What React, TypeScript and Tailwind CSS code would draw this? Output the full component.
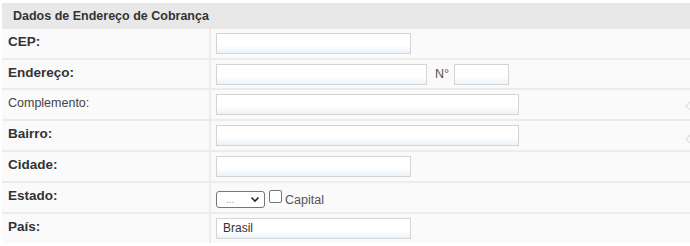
import React from "react";

type Row = {
  label: string;
  bold?: boolean;
  h?: string;
  content: React.ReactNode;
};

const Field = ({ w, value }: { w: string; value?: string }) => (
  <div
    className={`${w} h-[21px] border border-[#d4d4d4] bg-gradient-to-b from-white from-60% to-[#eaf3fa] px-[6px] text-[12px] leading-[19px] text-[#333]`}
  >
    {value}
  </div>
);

const rows: Row[] = [
  { label: "CEP:", bold: true, content: <Field w="w-[195px]" /> },
  {
    label: "Endereço:",
    bold: true,
    h: "h-[28px]",
    content: (
      <div className="flex items-center">
        <Field w="w-[211px]" />
        <span className="ml-[8px] mr-[5px] text-[12.5px] text-[#555]">N°</span>
        <Field w="w-[55px]" />
      </div>
    ),
  },
  { label: "Complemento:", content: <Field w="w-[303px]" /> },
  { label: "Bairro:", bold: true, content: <Field w="w-[303px]" /> },
  { label: "Cidade:", bold: true, content: <Field w="w-[195px]" /> },
  {
    label: "Estado:",
    bold: true,
    content: (
      <div className="flex items-end pt-[3px]">
        <div className="flex h-[17px] w-[49px] items-center justify-between rounded-[3px] border border-[#767676] bg-white pl-[9px] pr-[4px] text-[10px] text-[#999]">
          <span className="leading-[10px]">...</span>
          <svg width="10" height="7" viewBox="0 0 10 7" fill="none" stroke="#222" strokeWidth="1.6">
            <path d="M1.5 1.5 5 5l3.5-3.5" />
          </svg>
        </div>
        <div className="mb-[5px] ml-[4px] h-[13px] w-[13px] rounded-[2px] border border-[#767676] bg-white" />
        <span className="ml-[3px] text-[12.5px] leading-[15px] text-[#555]">Capital</span>
      </div>
    ),
  },
  { label: "País:", bold: true, content: <Field w="w-[195px]" value="Brasil" /> },
];

export default function App() {
  return (
    <div className="relative h-[246px] w-[690px] overflow-hidden bg-white pl-[2px] pt-[3px] font-['Liberation_Sans',Arial,sans-serif]">
      <div className="flex h-[26px] items-center bg-[#e8e8e8] pl-[11px] text-[12.5px] font-bold text-[#333]">
        Dados de Endereço de Cobrança
      </div>
      {rows.map((r, i) => (
        <div
          key={r.label}
          className={`flex bg-[#fafafa] ${i < rows.length - 1 ? "border-b-2 border-[#ececec]" : ""}`}
        >
          <div
            className={`${r.h ?? "h-[29px]"} w-[209px] shrink-0 border-r-2 border-[#ececec] pl-[6px] ${
              r.bold ? "pt-[5px] text-[13.5px] font-bold leading-[16px] text-[#333]" : "pt-[5px] text-[12.5px] leading-[16px] text-[#444]"
            }`}
          >
            {r.label}
          </div>
          <div className="pl-[5px] pt-[4px]">{r.content}</div>
        </div>
      ))}
      <svg className="absolute right-0 top-[101px]" width="5" height="10" viewBox="0 0 5 10">
        <path d="M5 1 1 5l4 4" fill="none" stroke="#e2e2e2" strokeWidth="1.5" />
      </svg>
      <svg className="absolute right-0 top-[134px]" width="5" height="10" viewBox="0 0 5 10">
        <path d="M5 1 1 5l4 4" fill="none" stroke="#e2e2e2" strokeWidth="1.5" />
      </svg>
    </div>
  );
}
